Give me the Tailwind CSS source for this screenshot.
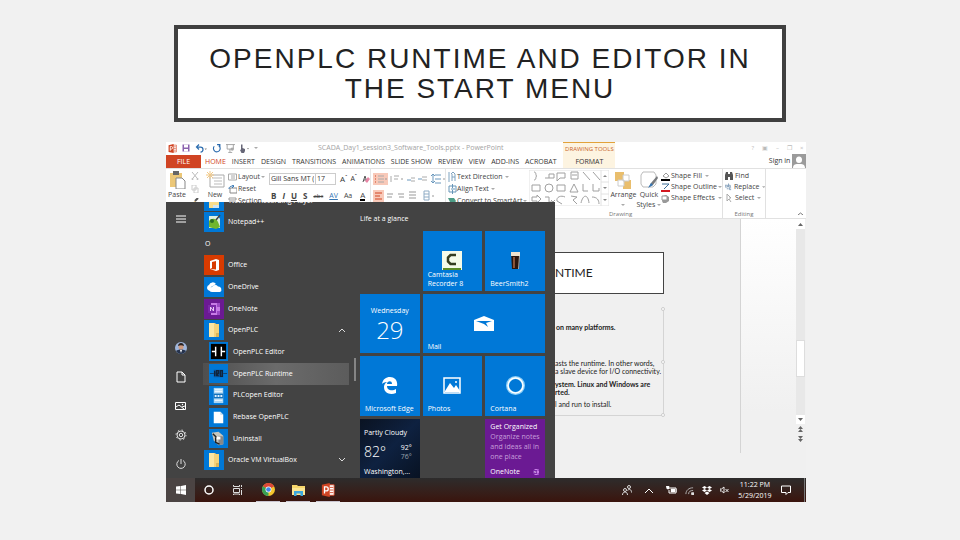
<!DOCTYPE html>
<html lang="en">
  <head>
    <meta charset="UTF-8" />
    <meta name="viewport" content="width=device-width, initial-scale=1" />
    <title>OpenPLC Runtime and Editor in the Start Menu</title>
    <script src="https://cdn.jsdelivr.net/npm/@tailwindcss/browser@4"></script>
  </head>
  <body class="bg-[#f1f1f1] pt-[25px] font-['Open_Sans','Noto_Sans',sans-serif] text-[7px] leading-[10px]">
    <!-- Shared icons -->
    <svg class="hidden">
      <symbol id="folder" viewBox="0 0 20 20"><path d="M5 3h6l1 1h3v13H5z" fill="#f3d27a"/><path d="M5 3h5v14H5z" fill="#fbe6a2"/><path d="M12 13h3v4h-3z" fill="#d9b45a"/></symbol>
      <symbol id="onenote" viewBox="0 0 20 20"><path d="M7 4h9v12H7z" fill="#c77be6"/><path d="M13 4h3v4h-3zM13 12h3v4h-3z" fill="#9a48c4"/><path d="M4 6h8v8H4z" fill="#7a28a8"/><path d="M6.500 12V8l3 4V8" fill="none" stroke="#e9c8f5"/></symbol>
      <symbol id="ppt" viewBox="0 0 16 16"><path d="M8 2h7v12H8z" fill="#fff" stroke="#d04423"/><path d="M10 5h4M10 8h4M10 11h4" stroke="#d04423"/><path d="M1 2l9-2v16l-9-2z" fill="#d04423"/><path d="M4 12V4.500h2a2 2 0 0 1 0 4.500H4" fill="none" stroke="#fff" stroke-width="1.500"/></symbol>
      <symbol id="caret" viewBox="0 0 4 4"><path d="M0 1h4L2 3z" fill="#aaa"/></symbol>
    </svg>

    <h1 class="mr-[174px] ml-[174px] flex min-h-[97px] items-center justify-center border-4 border-[#404040] bg-white px-6 text-center font-['Liberation_Sans',sans-serif] text-[28px] leading-[30px] tracking-[2px] text-[#222]">OPENPLC RUNTIME AND EDITOR IN<br />THE START MENU</h1>

    <main class="relative mt-[20px] mr-[16%] ml-[166px] flex aspect-video flex-col overflow-hidden bg-[#f0f0f0]">
      <!-- PowerPoint title bar and tabs -->
      <header class="flex h-[26px] shrink-0 bg-white text-[#333]">
        <div class="flex grow flex-col">
          <div class="flex h-[12px] items-center gap-[5px] pl-[2px]">
            <svg class="size-[9px]"><use href="#ppt"/></svg>
            <button aria-label="Save"><svg class="size-[8px]" viewBox="0 0 16 16"><path d="M1 1h14v14H1z" fill="#8a62ae"/><path d="M4 1h8v6H4zM4 10h8v5H4z" fill="#fff"/></svg></button>
            <button aria-label="Undo"><svg class="h-[9px] w-[12px]" viewBox="0 0 24 18"><path d="M3 6h8a5 5 0 0 1 0 10M8 1L3 6l5 5" fill="none" stroke="#2f6fb0" stroke-width="2.500"/><path d="M19 9h5l-2.500 3z" fill="#888"/></svg></button>
            <button aria-label="Repeat"><svg class="size-[9px]" viewBox="0 0 16 16"><path d="M4 4a6 6 0 1 0 8-1M9 1h5v5" fill="none" stroke="#2a6aad" stroke-width="2"/></svg></button>
            <button aria-label="Slide show"><svg class="size-[9px]" viewBox="0 0 16 16"><path d="M0 1h16M2 1v8h11V1M7 9v5M4 15h7" fill="none" stroke="#999" stroke-width="1.500"/><circle cx="11" cy="9" r="3" fill="#aaa"/></svg></button>
            <button aria-label="Touch mode"><svg class="h-[9px] w-[9px]" viewBox="0 0 18 18"><path d="M2 1h3v7l5 2v4l-2 4H3l-3-6 2-1z" fill="#667"/><path d="M14 8h4l-2 3z" fill="#888"/></svg></button>
            <svg class="size-[4px]"><use href="#caret"/></svg>
            <span class="ml-[55px] whitespace-nowrap text-[#a3a3a3]">SCADA_Day1_session3_Software_Tools.pptx - PowerPoint</span>
          </div>
          <nav class="flex h-[14px] items-center gap-[6px] pt-[1px] whitespace-nowrap">
            <button class="mr-[-2px] h-[13px] w-[35px] bg-[#d04423] text-white">FILE</button>
            <button class="text-[#d04423]">HOME</button>
            <button>INSERT</button>
            <button>DESIGN</button>
            <button>TRANSITIONS</button>
            <button>ANIMATIONS</button>
            <button>SLIDE SHOW</button>
            <button>REVIEW</button>
            <button>VIEW</button>
            <button>ADD-INS</button>
            <button>ACROBAT</button>
          </nav>
        </div>
        <div class="flex w-[52px] shrink-0 flex-col items-center border-t border-[#e2a23a] bg-[#fdf4e1]">
          <span class="h-[12px] text-[6px] leading-[12px] whitespace-nowrap text-[#c8642b]">DRAWING TOOLS</span>
          <button class="h-[13px]">FORMAT</button>
        </div>
        <div class="flex w-[191px] shrink-0 flex-col items-end">
          <div class="flex h-[12px] items-center gap-[8px] pr-[3px] text-[6px] text-[#bbb]"><span>?</span><span>▣</span><span>–</span><span>❐</span><span>×</span></div>
          <div class="flex h-[14px] items-center gap-[2px]"><button>Sign in</button>
            <svg class="h-[14px] w-[14px]" viewBox="0 0 14 14"><path d="M0 0h14v14H0z" fill="#9b9b9b"/><path d="M7 2.500a3 3 0 0 1 3 3.500c0 2-1 3-3 3S4 8 4 6a3 3 0 0 1 3-3.500zM1 14c0-4 3-4 6-4s6 0 6 4z" fill="#fff"/></svg>
          </div>
        </div>
      </header>

      <!-- Ribbon -->
      <section class="flex h-[51px] shrink-0 border-t border-b border-[#e1e1e1] bg-white whitespace-nowrap text-[#444]">
        <div class="flex w-[36px] shrink-0 gap-[3px] pt-[2px]">
          <button class="flex w-[22px] flex-col items-center">
            <svg class="h-[18px] w-[17px]" viewBox="0 0 17 18"><path d="M1 2h12v14H1z" fill="#ecc777"/><path d="M4 0h6v4H4z" fill="#666"/><path d="M7 7h6l3 3v8H7z" fill="#fff" stroke="#888"/></svg>
            <span class="leading-[12px]">Paste</span>
          </button>
          <div class="flex flex-col gap-[5px] pt-[1px]">
            <svg class="size-[8px]" viewBox="0 0 8 8"><path d="M1 0l5 6M7 0L2 6" stroke="#bbb"/><circle cx="1.500" cy="7" r="1" fill="#bbb"/><circle cx="6.500" cy="7" r="1" fill="#bbb"/></svg>
            <svg class="size-[8px]" viewBox="0 0 8 8"><path d="M1 0h4v5H1zM3 3h4v5H3z" fill="#fff" stroke="#ccc"/></svg>
            <svg class="size-[8px]" viewBox="0 0 8 8"><path d="M0 6l4-3 2 2-3 3z" fill="#e7b55c"/><path d="M4 3l3-3" stroke="#555" stroke-width="2"/></svg>
          </div>
        </div>
        <button class="flex w-[26px] shrink-0 flex-col items-center pt-[2px]">
          <svg class="h-[18px] w-[19px]" viewBox="0 0 19 18"><path d="M4 4h14v12H4z" fill="#fff" stroke="#aaa"/><path d="M6 7h10M8 10h8M8 13h8" stroke="#bbb"/><path d="M4 0v8M0 4h8M1 1l6 6M7 1L1 7" stroke="#f2c987"/></svg>
          <span class="leading-[12px]">New</span>
        </button>
        <div class="flex w-[40px] shrink-0 flex-col gap-[2px] pt-[3px]">
          <button class="flex items-center gap-[1px]"><svg class="h-[8px] w-[9px]" viewBox="0 0 9 8"><path d="M.5 1h8v6h-8zM3 3h4M3 5h4" fill="none" stroke="#aaa"/></svg>Layout <svg class="size-[4px]"><use href="#caret"/></svg></button>
          <button class="flex items-center gap-[1px]"><svg class="h-[9px] w-[9px]" viewBox="0 0 9 9"><path d="M2 3h7v5H2z" fill="#fff" stroke="#888"/><path d="M1 4c0-3 3-3 5-3M4 0l2 1-2 2" fill="none" stroke="#3576b3"/></svg>Reset</button>
          <button class="flex items-center gap-[1px]"><svg class="h-[8px] w-[9px]" viewBox="0 0 9 8"><path d="M1 1h7v2H1zM1 5h7v2H1z" fill="#fff" stroke="#999"/></svg>Section</button>
        </div>
        <div class="flex w-[103px] shrink-0 flex-col gap-[4px] border-r border-[#e6e6e6] pt-[4px] pl-[1px]">
          <div class="flex items-center text-[#333]">
            <select aria-label="Font" class="h-[12px] w-[47px] appearance-none border border-[#ccc] px-[1px] text-[7px] leading-[10px]"><option>Gill Sans MT (</option></select>
            <select aria-label="Font size" class="h-[12px] w-[20px] appearance-none border border-l-0 border-[#ccc] px-[1px] text-[7px] leading-[10px]"><option>17</option></select>
            <button class="ml-[4px] text-[8px]">A<sup>ˆ</sup></button>
            <button class="ml-[3px] text-[7px]">A<sup>ˇ</sup></button>
            <button class="ml-[5px]" aria-label="Clear formatting"><svg class="size-[8px]" viewBox="0 0 8 8"><path d="M1 7l2-6 2 6M2 5h3" fill="none" stroke="#555"/><path d="M3 6l3-4 2 2-3 4z" fill="#e884a4"/></svg></button>
          </div>
          <div class="flex items-center gap-[6px] pt-[2px] pl-[2px] text-[8px] font-bold">
            <button>B</button><button class="italic">I</button><button class="underline">U</button><button>S</button>
            <button class="text-[6px] font-normal line-through">abc</button><button class="text-[7px] font-normal text-[#3576b3] underline">AV</button><button class="text-[7px] font-normal">Aa</button>
            <button class="ml-[2px] border-b-2 border-black leading-[8px] font-normal">A</button>
          </div>
        </div>
        <div class="flex w-[75px] shrink-0 flex-col gap-[5px] border-r border-[#e6e6e6] pt-[4px] pl-[2px]">
          <svg class="h-[12px] w-[72px]" viewBox="0 0 72 12"><path d="M0 0h15v12H0z" fill="#f8c9b9"/><path d="M2 3h1M2 6h1M2 9h1" stroke="#d04423"/><path d="M5 3h6M5 6h6M5 9h6M21 3h5M21 6h4M18 3v6M38 5h4M38 8h4M49 4h5M49 7h5" stroke="#aaa"/><path d="M34 7h4M45 6h4M62 2h6M62 6h6M62 10h6M60 1v9M58 3l2-2 2 2M58 8l2 2 2-2" fill="none" stroke="#6a98bd"/><path d="M12 6h2M28 6h2M70 6h2" stroke="#999"/></svg>
          <svg class="h-[12px] w-[72px]" viewBox="0 0 72 12"><path d="M0 0h11v12H0z" fill="#f8c9b9"/><path d="M2 3h7M2 6h5M2 9h7" stroke="#d04423"/><path d="M14 4h6M14 7h5M25 4h6M26 7h5M36 2h7M36 5h7M36 8h7" stroke="#999"/><path d="M51 1h5v9h-5zM51 4h5M51 7h5" fill="none" stroke="#8facc5"/><path d="M59 6h2" stroke="#999"/></svg>
        </div>
        <div class="flex w-[83px] shrink-0 flex-col gap-[2px] pt-[3px] pl-[2px]">
          <button class="flex items-center"><svg class="h-[10px] w-[9px]" viewBox="0 0 9 10"><path d="M1 0v10M4 2v7M7 2v7M4 5h3M3 2l2-2 2 2" fill="none" stroke="#7fa3c0"/></svg>Text Direction <svg class="ml-[2px] size-[4px]"><use href="#caret"/></svg></button>
          <button class="flex items-center"><svg class="h-[10px] w-[9px]" viewBox="0 0 9 10"><path d="M1 2h7v6H1zM4.500 0v4M4.500 6v4M3 5h4" fill="none" stroke="#6795b8"/></svg>Align Text <svg class="ml-[2px] size-[4px]"><use href="#caret"/></svg></button>
          <button class="flex items-center"><svg class="h-[10px] w-[9px]" viewBox="0 0 9 10"><path d="M0 2h6l2 3-2 3H3z" fill="#4d9c86"/></svg>Convert to SmartArt <svg class="ml-[1px] size-[4px]"><use href="#caret"/></svg></button>
        </div>
        <!-- Shape gallery -->
        <svg class="mt-[1px] h-[36px] w-[80px] shrink-0" viewBox="0 0 80 36">
          <path d="M0 0h80v36H0zM72 0v36M72 12h8M72 24h8" fill="none" stroke="#e2e2e2"/>
          <g fill="none" stroke="#a0a0a0"><path d="M5 2c3 0 1 4 3 4-2 0 0 4-3 4M16 8h4V4h5v4h-5M28 3h8v5h-5l-3 3zM42 2h7v7h-7zM43 5h5M54 2l7 8M64 2l7 8M3 15h8v6H3zM28 15h8v6h-8zM45 14l4 8h-8zM54 14v7h5M64 14v7h6v-3M3 27h5v-2l4 4-4 4v-2H3zM16 27h4v5h4M22 30l2 2 2-2M36 27c-4-2-9 0-8 4l5 3M42 26l6 1-4 3 4 4M52 33c2-9 7-9 8 0M63 27c5 0 7 3 7 7"/><circle cx="20" cy="18" r="4"/></g>
          <path d="M74 7h4l-2-2zM74 17h4l-2 2zM74 29h4l-2 2z" fill="#888"/>
        </svg>
        <div class="flex w-[114px] shrink-0 flex-col border-r border-[#e1e1e1]">
          <div class="flex h-[41px]">
            <button class="flex w-[29px] flex-col items-center pt-[2px]">
              <svg class="h-[19px] w-[18px]" viewBox="0 0 18 19"><path d="M1 1h9v9H1zM9 9h8v9H9z" fill="#e9be6d"/><path d="M9 4h6v6H9zM4 9h6v6H4z" fill="#fff" stroke="#ccc"/></svg>
              <span>Arrange</span><svg class="mt-[3px] size-[4px]"><use href="#caret"/></svg>
            </button>
            <button class="flex w-[22px] flex-col items-center pt-[2px]">
              <svg class="h-[19px] w-[18px]" viewBox="0 0 18 19"><path d="M3 1h11l2 3v9l-3 3H3l-2-3V4z" fill="#fff" stroke="#bbb"/><path d="M17 5l-6 7-2 4 4-2 5-7z" fill="#77797c"/><path d="M11 12l-3 5 5-3z" fill="#3576b3"/></svg>
              <span>Quick</span><span class="flex items-center">Styles<svg class="ml-[2px] size-[4px]"><use href="#caret"/></svg></span>
            </button>
            <div class="flex flex-col gap-[1px] pt-[2px] pl-[1px]">
              <button class="flex items-center gap-[1px]"><svg class="size-[9px]" viewBox="0 0 9 9"><path d="M2 4l3-3 3 3-3 2z" fill="#fff" stroke="#999"/><path d="M0 7h9v2H0z"/></svg>Shape Fill <svg class="ml-[2px] size-[4px]"><use href="#caret"/></svg></button>
              <button class="flex items-center gap-[1px]"><svg class="size-[9px]" viewBox="0 0 9 9"><path d="M1 1h7M3 6l5-5" stroke="#3b6c95" fill="none"/><path d="M0 7h9v2H0z" fill="#d31820"/></svg>Shape Outline <svg class="size-[4px]"><use href="#caret"/></svg></button>
              <button class="flex items-center gap-[1px]"><svg class="size-[9px]" viewBox="0 0 9 9"><path d="M2 2l3-1 3 2v4L5 9H2L1 7z" fill="#999"/><path d="M1 2h5v4H1z" fill="#fff" stroke="#999"/></svg>Shape Effects <svg class="ml-[2px] size-[4px]"><use href="#caret"/></svg></button>
            </div>
          </div>
          <span class="text-[6px] leading-[8px] text-[#777]">Drawing</span>
        </div>
        <div class="flex w-[43px] shrink-0 flex-col border-r border-[#e1e1e1]">
          <div class="flex h-[41px] flex-col gap-[1px] pt-[2px] pl-[2px]">
            <button class="flex items-center gap-[2px]"><svg class="size-[8px]" viewBox="0 0 8 8"><path d="M0 3l1-3h2v2h2V0h2l1 3v5H5V5H3v3H0z" fill="#555"/></svg>Find</button>
            <button class="flex items-center gap-[2px]"><svg class="size-[8px]" viewBox="0 0 8 8"><path d="M0 2h3v2H0zM4 0v4h2V2H4M2 6h2M7 5H5v2h2" fill="none" stroke="#7f9cb8"/></svg>Replace <svg class="size-[4px]"><use href="#caret"/></svg></button>
            <button class="flex items-center gap-[2px]"><svg class="size-[8px]" viewBox="0 0 8 8"><path d="M2 0v7l2-2 2 3M2 0l4 4H4" fill="none" stroke="#aaa"/></svg>Select <svg class="ml-[1px] size-[4px]"><use href="#caret"/></svg></button>
          </div>
          <span class="text-center text-[6px] leading-[8px] text-[#777]">Editing</span>
        </div>
        <button class="mt-auto ml-auto p-[3px]" aria-label="Collapse ribbon"><svg class="h-[3px] w-[5px]" viewBox="0 0 5 3"><path d="M0 3l2.500-2L5 3" fill="none" stroke="#777"/></svg></button>
      </section>

      <!-- Slide being edited -->
      <section class="flex min-h-0 grow">
        <div class="mb-[25px] ml-[389px] w-[186px] shrink-0 border-r border-[#d4d4d4] pt-[33px] font-['Lato',sans-serif] text-[7px] leading-[8px] whitespace-nowrap text-[#222]">
          <h2 class="mr-[76px] flex h-[42px] items-center border border-l-0 border-[#444] bg-white text-[12px]">NTIME</h2>
          <div class="relative mt-[15px] mr-[76px] h-[107px] border-r border-b border-[#d4d4d4] pt-[14px]">
            <p class="pl-[1px] font-bold">on many platforms.</p>
            <p class="mt-[28px]">asts the runtime. In other words,<br />a slave device for I/O connectivity.</p>
            <p class="mt-[5px] font-bold">ystem. Linux and Windows are<br />rted.</p>
            <p class="mt-[4px]">l and run to install.</p>
            <i class="absolute -top-[2px] -right-[2px] size-[4px] rounded-full border border-[#ccc] bg-white"></i>
            <i class="absolute top-[51px] -right-[2px] size-[4px] rounded-full border border-[#ccc] bg-white"></i>
            <i class="absolute -right-[2px] -bottom-[2px] size-[4px] rounded-full border border-[#ccc] bg-white"></i>
          </div>
        </div>
        <div class="grow bg-linear-to-b from-white to-[#f0f0f0] to-75%"></div>
        <div class="mr-[1px] flex w-[9px] shrink-0 flex-col items-center bg-[#f0f0f0]">
          <svg class="h-[10px] w-[9px] bg-white" viewBox="0 0 9 10"><path d="M2 7h5L4.500 4z" fill="#666"/></svg>
          <div class="flex h-[186px] w-full flex-col bg-[#e8e8e8] pt-[111px]"><div class="h-[37px] border border-[#ddd] bg-white"></div></div>
          <svg class="h-[9px] w-[9px] bg-white" viewBox="0 0 9 9"><path d="M2 3h5L4.500 6z" fill="#666"/></svg>
          <svg class="h-[20px] w-[9px]" viewBox="0 0 9 20"><path d="M4.500 2L7 5H2zM4.500 5L7 8H2zM2 12h5l-2.500 3zM2 15h5l-2.500 3z" fill="#666"/></svg>
        </div>
      </section>

      <!-- Start menu -->
      <section class="absolute top-[60px] bottom-[24px] left-0 flex w-[389px] overflow-hidden bg-[#434343] text-white">
        <nav class="flex w-[29px] shrink-0 flex-col items-center pt-[12px]">
          <button aria-label="Expand"><svg class="h-[9px] w-[10px]" viewBox="0 0 10 9"><path d="M0 2h10M0 5h10M0 8h10" stroke="#fff"/></svg></button>
          <div class="mt-auto mb-[8px] flex flex-col items-center gap-[17px]">
            <button aria-label="Account"><svg class="size-[12px]" viewBox="0 0 12 12"><circle cx="6" cy="6" r="6" fill="#9fb6dc"/><path d="M1 9c2-2 8-2 10 0-2 4-8 4-10 0z" fill="#26334d"/><circle cx="6" cy="5" r="2.500" fill="#cf9c80"/><path d="M3 4c0-4 6-4 6 0-2-1-4-1-6 0z" fill="#29211f"/><path d="M5 8h2l-1 3z" fill="#fff"/></svg></button>
            <button aria-label="Documents"><svg class="h-[12px] w-[10px]" viewBox="0 0 10 12"><path d="M1 1h5l3 3v7H1zM6 1v3h3" fill="none" stroke="#fff"/></svg></button>
            <button aria-label="Pictures"><svg class="h-[12px] w-[11px]" viewBox="0 0 11 12"><path d="M.5 2.500h10v7H.5zM1 7l3-2 5 4M7 7l3-1" fill="none" stroke="#fff"/><circle cx="7.500" cy="4.500" r=".7" fill="#fff"/></svg></button>
            <button aria-label="Settings"><svg class="size-[12px]" viewBox="0 0 12 12"><circle cx="6" cy="6" r="4" fill="none" stroke="#ddd"/><circle cx="6" cy="6" r="1.700" fill="none" stroke="#ddd"/><circle cx="6" cy="6" r="5" fill="none" stroke="#ddd" stroke-dasharray="1.500 2.427"/></svg></button>
            <button aria-label="Power"><svg class="size-[12px]" viewBox="0 0 12 12"><path d="M4 2.500a4.200 4.200 0 1 0 4 0M6 1v5" fill="none" stroke="#ddd"/></svg></button>
          </div>
        </nav>

        <ul class="flex w-[154px] shrink-0 flex-col pb-[7px] pl-[9px]">
          <li class="flex h-[9px] shrink-0 items-end gap-[5px]"><svg class="h-[9px] w-[20px] shrink-0 bg-[#0078d7]" viewBox="0 0 20 9"><path d="M5 0h10v6H5z" fill="#f8dd8b"/><path d="M9 3h6v3H9z" fill="#cfe5f2"/></svg><span class="pb-[5px] whitespace-nowrap">Network Recording Player</span></li>
          <li class="flex flex-1 items-center gap-[4px]"><svg class="size-[20px] bg-[#0078d7]" viewBox="0 0 20 20"><path d="M5 4h9l2 3v9H5z" fill="#dcefe0"/><path d="M5 9c3-4 8-2 9 1l2 5-4 2-7-2z" fill="#71b62e"/><circle cx="8" cy="9" r="2" fill="#2e6e26"/><path d="M12 8l4-5" stroke="#444" stroke-width="1.500"/></svg><a href="#">Notepad++</a></li>
          <li class="flex flex-1 items-center pl-[1px]">O</li>
          <li class="flex flex-1 items-center gap-[4px]"><svg class="size-[20px] bg-[#d83b01]" viewBox="0 0 20 20"><path d="M6 6l6-2 3 1v10l-3 1-6-2 6 .5V6L8 7v6l-2 1z" fill="#fff"/></svg><a href="#">Office</a></li>
          <li class="flex flex-1 items-center gap-[4px]"><svg class="size-[20px] bg-[#0078d7]" viewBox="0 0 20 20"><path d="M4 13a3 3 0 0 1 1-5 4 4 0 0 1 7-1l-5 3-1 4z" fill="#fff"/><path d="M8 15a2.500 2.500 0 0 1 0-5 3.500 3.500 0 0 1 6-.5 3 3 0 0 1 2 5.500z" fill="#fff"/></svg><a href="#">OneDrive</a></li>
          <li class="flex flex-1 items-center gap-[4px]"><svg class="size-[20px] bg-[#6b1a93]"><use href="#onenote"/></svg><a href="#">OneNote</a></li>
          <li class="flex flex-1 items-center gap-[4px]"><svg class="size-[20px] bg-[#0078d7]"><use href="#folder"/></svg><a href="#">OpenPLC</a><svg class="mr-[4px] ml-auto h-[4px] w-[6px]" viewBox="0 0 6 4"><path d="M0 4l3-3 3 3" fill="none" stroke="#ddd"/></svg></li>
          <li class="flex flex-1 items-center gap-[5px] pl-[5px]"><svg class="size-[19px] bg-[#0078d7]" viewBox="0 0 20 20"><path d="M2 2h16v16H2z"/><path d="M3 10h4M13 10h4M7 5v10M13 5v10" stroke="#fff" stroke-width="1.500"/></svg><a href="#">OpenPLC Editor</a></li>
          <li class="-ml-[1px] flex flex-1 items-center gap-[5px] bg-linear-to-r from-[#4f4f4f] via-[#6b6b6b] to-[#5c5c5c] pl-[6px]"><svg class="size-[19px] bg-[#0078d7]" viewBox="0 0 20 20"><path d="M1 10h18" stroke="#15406c"/><path d="M5 6h10v8H5z" fill="#0a5fae"/><path d="M6 7v6M8 13V7h2v3H8l2 3M12 7v6h2V7z" fill="none" stroke="#10243c" stroke-width="1.500"/></svg><a href="#">OpenPLC Runtime</a></li>
          <li class="flex flex-1 items-center gap-[5px] pl-[5px]"><svg class="size-[19px] bg-[#0078d7]" viewBox="0 0 20 20"><path d="M5 2h10v16H5z" fill="#a9d5f3"/><path d="M5 8h10v5H5z" fill="#1473bd"/><path d="M6 4h8M6 6h8M6 15h8" stroke="#fff"/><path d="M6 10.500h8" stroke="#e2f2ff" stroke-width="2" stroke-dasharray="2 1"/></svg><a href="#">PLCopen Editor</a></li>
          <li class="flex flex-1 items-center gap-[5px] pl-[5px]"><svg class="size-[19px] bg-[#0078d7]" viewBox="0 0 20 20"><path d="M5 4h7l3 3v9H5z" fill="#fff"/><path d="M12 4v3h3" fill="#b9d7ef"/></svg><a href="#">Rebase OpenPLC</a></li>
          <li class="flex flex-1 items-center gap-[5px] pl-[5px]"><svg class="size-[19px] bg-[#0078d7]" viewBox="0 0 20 20"><path d="M3 4l7-1 5 4v9l-5 1-5-5z" fill="#c6c6bd"/><path d="M10 7l5 1v8l-5 1z" fill="#888"/><path d="M4 5l4 4M7 9v5l4 2" fill="none" stroke="#222" stroke-width="1.500"/><path d="M8 8h4v3H8z" fill="#fff"/></svg><a href="#">Uninstall</a></li>
          <li class="flex flex-1 items-center gap-[4px]"><svg class="size-[20px] bg-[#0078d7]"><use href="#folder"/></svg><a href="#">Oracle VM VirtualBox</a><svg class="mr-[4px] ml-auto h-[4px] w-[6px]" viewBox="0 0 6 4"><path d="M0 0l3 3 3-3" fill="none" stroke="#ddd"/></svg></li>
        </ul>
        <div class="mt-[156px] ml-[5px] h-[23px] w-[2px] shrink-0 bg-[#858585]"></div>

        <div class="ml-[4px] w-[185px] shrink-0 pt-[12px]">
          <h3 class="mb-[7px]">Life at a glance</h3>
          <div class="grid grid-cols-3 gap-[3px]">
            <a href="#" class="col-start-2 flex aspect-square flex-col items-center bg-[#0078d7]">
              <svg class="mt-[20px] h-[19px] w-[20px]" viewBox="0 0 20 19"><path d="M0 0h20v19H0z" fill="#f5fbe9"/><path d="M1 17h18v2H1z" fill="#5c8c28"/><path d="M14 4H8.500L6 6.500v4L8.500 13H14" fill="none" stroke="#343d20" stroke-width="2.500"/></svg>
              <span class="w-full pl-[5px] leading-[9px]">Camtasia<br />Recorder 8</span>
            </a>
            <a href="#" class="flex aspect-square flex-col items-center bg-[#0078d7]">
              <svg class="mt-[20px] h-[19px] w-[11px]" viewBox="0 0 11 19"><path d="M1 1h9l-1 17H2z" fill="#2b150e"/><path d="M1 1h9v4H1z" fill="#eee1cf"/><path d="M3 6h2v11H3z" fill="#8a5439"/><path d="M9 5h1L9 18H8z" fill="#aaa"/></svg>
              <span class="mt-[9px] w-full pl-[5px] leading-[9px]">BeerSmith2</span>
            </a>
            <a href="#" class="flex aspect-square flex-col items-center bg-[#0078d7] pt-[12px]">
              <span>Wednesday</span><span class="text-[24px] leading-[28px] font-light">29</span>
            </a>
            <a href="#" class="col-span-2 flex flex-col items-center bg-[#0078d7]">
              <svg class="mt-[22px] h-[15px] w-[20px]" viewBox="0 0 20 15"><path d="M0 4l10-4 10 4v11H0z" fill="#fff"/><path d="M2 5h16l-6 2 2 4-4-3z" fill="#0078d7"/></svg>
              <span class="mt-[11px] w-full pl-[5px] leading-[9px]">Mail</span>
            </a>
            <a href="#" class="flex aspect-square flex-col items-center bg-[#0078d7]">
              <svg class="mt-[21px] size-[17px]" viewBox="0 0 17 17"><path d="M1 7C2 2 5 0 9 0c5 0 8 4 7 9H6c0 5 6 5 9 3v4c-5 2-12 1-12-6 0-2 1-4 3-5-3 0-4 1-5 2zM6 7h5c0-4-5-3-5 0z" fill="#fff" fill-rule="evenodd"/></svg>
              <span class="mt-[10px] w-full pl-[5px] leading-[9px]">Microsoft Edge</span>
            </a>
            <a href="#" class="flex aspect-square flex-col items-center bg-[#0078d7]">
              <svg class="mt-[21px] h-[17px] w-[18px]" viewBox="0 0 18 17"><path d="M1 1h16v15H1z" fill="none" stroke="#fff" stroke-width="1.500"/><path d="M2 14l5-8 4 5 2-3 4 6v1H2z" fill="#fff"/><circle cx="13" cy="5" r="1" fill="#fff"/></svg>
              <span class="mt-[10px] w-full pl-[5px] leading-[9px]">Photos</span>
            </a>
            <a href="#" class="flex aspect-square flex-col items-center bg-[#0078d7]">
              <svg class="mt-[20px] size-[19px]" viewBox="0 0 19 19"><circle cx="9.500" cy="9.500" r="8" fill="none" stroke="#8fd0f7" stroke-width="3"/><circle cx="9.500" cy="9.500" r="7.500" fill="none" stroke="#fff" stroke-width="1.500"/></svg>
              <span class="mt-[9px] w-full pl-[5px] leading-[9px]">Cortana</span>
            </a>
            <a href="#" class="flex aspect-square flex-col bg-linear-to-br from-[#0a1322] via-[#0e2140] to-[#081222] pt-[8px] pl-[4px] leading-[11px] whitespace-nowrap">
              <span>Partly Cloudy</span>
              <span class="mt-[5px] flex items-center justify-between pr-[8px]"><span class="text-[14px] leading-[18px] font-light">82°</span><span class="leading-[9px]">92°<br /><span class="text-[#9aa3b0]">76°</span></span></span>
              <span class="mt-[5px]">Washington,...</span>
            </a>
            <a href="#" class="col-start-3 flex aspect-square flex-col bg-[#6b1a93] pt-[3px] pl-[5px] leading-[10px] whitespace-nowrap">
              <span>Get Organized</span>
              <span class="text-[#c79fdb]">Organize notes<br />and ideas all in<br />one place</span>
              <span class="mt-[5px] flex justify-between pr-[4px]">OneNote<svg class="size-[10px]"><use href="#onenote"/></svg></span>
            </a>
          </div>
        </div>
      </section>

      <!-- Taskbar -->
      <footer class="flex h-[24px] shrink-0 items-stretch bg-linear-to-b from-[#2d2c2c] to-[#3a140d] text-white">
        <button class="flex w-[29px] items-center justify-center bg-[#4b4443]" aria-label="Start"><svg class="size-[10px]" viewBox="0 0 10 10"><path d="M0 1.500L4.500 1v3.700H0zM5 1l5-1v4.700H5zM0 5.200h4.500V9L0 8.500zM5 5.200h5V10L5 9z" fill="#fff"/></svg></button>
        <button class="flex w-[28px] items-center justify-center" aria-label="Search"><svg class="size-[10px]" viewBox="0 0 10 10"><circle cx="5" cy="5" r="4" fill="none" stroke="#fff" stroke-width="1.500"/></svg></button>
        <button class="flex w-[30px] items-center justify-center" aria-label="Task view"><svg class="size-[10px]" viewBox="0 0 10 10"><path d="M.5 0v1.500h6V0M.5 3.500h6v4h-6zM.5 10V9h6v1M8.500 0v2M8.500 5v5M8.500 3v1" fill="none" stroke="#ddd"/></svg></button>
        <button class="mx-[3px] flex w-[24px] items-center justify-center border-b border-[#c9c5d0]" aria-label="Chrome"><svg class="size-[13px]" viewBox="0 0 14 14"><circle cx="7" cy="7" r="7" fill="#f3c52d"/><path d="M7 7L.9 3.500A7 7 0 0 1 13.100 3.500z" fill="#dc4737"/><path d="M7 7L.9 3.500A7 7 0 0 0 7 14z" fill="#37a055"/><circle cx="7" cy="7" r="3.200" fill="#fff"/><circle cx="7" cy="7" r="2.500" fill="#4285e8"/></svg></button>
        <button class="mx-[3px] flex w-[24px] items-center justify-center border-b border-[#c9c5d0]" aria-label="File Explorer"><svg class="h-[12px] w-[13px]" viewBox="0 0 13 12"><path d="M0 1h5l1 1h7v8H0z" fill="#f6d56a"/><path d="M0 4h13v7H0z" fill="#fbe592"/><path d="M2 12V7h9v5H8.500V9.500h-4V12z" fill="#3ba7dd"/></svg></button>
        <button class="mx-[3px] flex w-[24px] items-center justify-center border-b border-[#c9c5d0]" aria-label="PowerPoint"><svg class="size-[14px]"><use href="#ppt"/></svg></button>
        <div class="ml-auto flex items-center gap-[8px]">
          <svg class="size-[10px]" viewBox="0 0 10 10"><circle cx="7" cy="2" r="1.500" fill="none" stroke="#ddd"/><circle cx="3" cy="5" r="1.500" fill="none" stroke="#ddd"/><path d="M.5 10c0-4 5-4 5 0M5.500 5.500c2-2 4-1 4 2" fill="none" stroke="#ddd"/></svg>
          <svg class="mx-[5px] h-[5px] w-[8px]" viewBox="0 0 8 5"><path d="M0 5l4-4 4 4" fill="none" stroke="#fff"/></svg>
          <svg class="h-[8px] w-[11px]" viewBox="0 0 11 8"><path d="M2 2h8v5H3V4" fill="none" stroke="#fff"/><path d="M5 3h4v3H5zM0 0h3v3H1zM10.500 3v3" fill="#fff" stroke="#fff" stroke-width=".5"/></svg>
          <svg class="size-[9px]" viewBox="0 0 10 10"><path d="M1 9c0-4 3-7 8-7M4 9c0-3 2-4 5-4M7 9c0-1 1-1 2-1" fill="none" stroke="#bbb"/><path d="M7 7h3v3H7z" fill="#ddd"/></svg>
          <svg class="h-[9px] w-[10px]" viewBox="0 0 10 9"><path d="M2.500 0L5 1.500 2.500 3 0 1.500zM7.500 0L10 1.500 7.500 3 5 1.500zM2.500 3L5 4.500 2.500 6 0 4.500zM7.500 3L10 4.500 7.500 6 5 4.500zM5 5.500L7.500 7 5 9 2.500 7z" fill="#fff"/></svg>
          <svg class="h-[8px] w-[9px]" viewBox="0 0 9 8"><path d="M0 3h1.500l2.500-2v6L1.500 5H0zM5.500 3l3 3M8.500 3l-3 3" fill="none" stroke="#eee"/></svg>
          <time class="w-[35px] text-center leading-[11px] whitespace-nowrap">11:22 PM<br />5/29/2019</time>
          <button class="ml-[1px]" aria-label="Notifications"><svg class="h-[10px] w-[10px]" viewBox="0 0 10 10"><path d="M.5 1h9v6.500H7L5 9.500v-2H.5z" fill="none" stroke="#fff"/></svg></button>
          <i class="mr-[1px] ml-[5px] h-[24px] w-px bg-[#777]"></i>
        </div>
      </footer>
    </main>
  </body>
</html>
